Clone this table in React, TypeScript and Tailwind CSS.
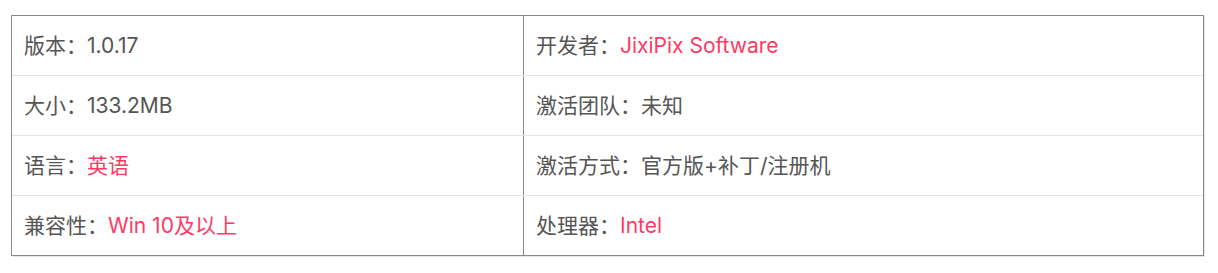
const rows: [string, string, boolean, string, string, boolean][] = [
  ["版本：", "1.0.17", false, "开发者：", "JixiPix Software", true],
  ["大小：", "133.2MB", false, "激活团队：", "未知", false],
  ["语言：", "英语", true, "激活方式：", "官方版+补丁/注册机", false],
  ["兼容性：", "Win 10及以上", true, "处理器：", "Intel", true],
];

function Cell({ label, value, red }: { label: string; value: string; red: boolean }) {
  return (
    <div className="h-[59px] flex items-center pl-[12px]">
      <span>{label}</span>
      <span className={red ? "text-[#fe3a64]" : ""}>{value}</span>
    </div>
  );
}

export default function App() {
  return (
    <div
      className="bg-white w-[1218px] h-[273px] pt-[15px] pl-[11px] text-[21px] text-[#555]"
      style={{ fontFamily: '"Inter", "Noto Sans CJK SC", sans-serif' }}
    >
      <div className="w-[1193px] border border-[#888] shadow-[1px_1px_0_#e6e6e6]">
        {rows.map((r, i) => (
          <div
            key={i}
            className={`grid grid-cols-[512px_1fr] ${i > 0 ? "border-t border-[#dde4f3]" : ""}`}
          >
            <div className="border-r border-[#888]">
              <Cell label={r[0]} value={r[1]} red={r[2]} />
            </div>
            <Cell label={r[3]} value={r[4]} red={r[5]} />
          </div>
        ))}
      </div>
    </div>
  );
}
